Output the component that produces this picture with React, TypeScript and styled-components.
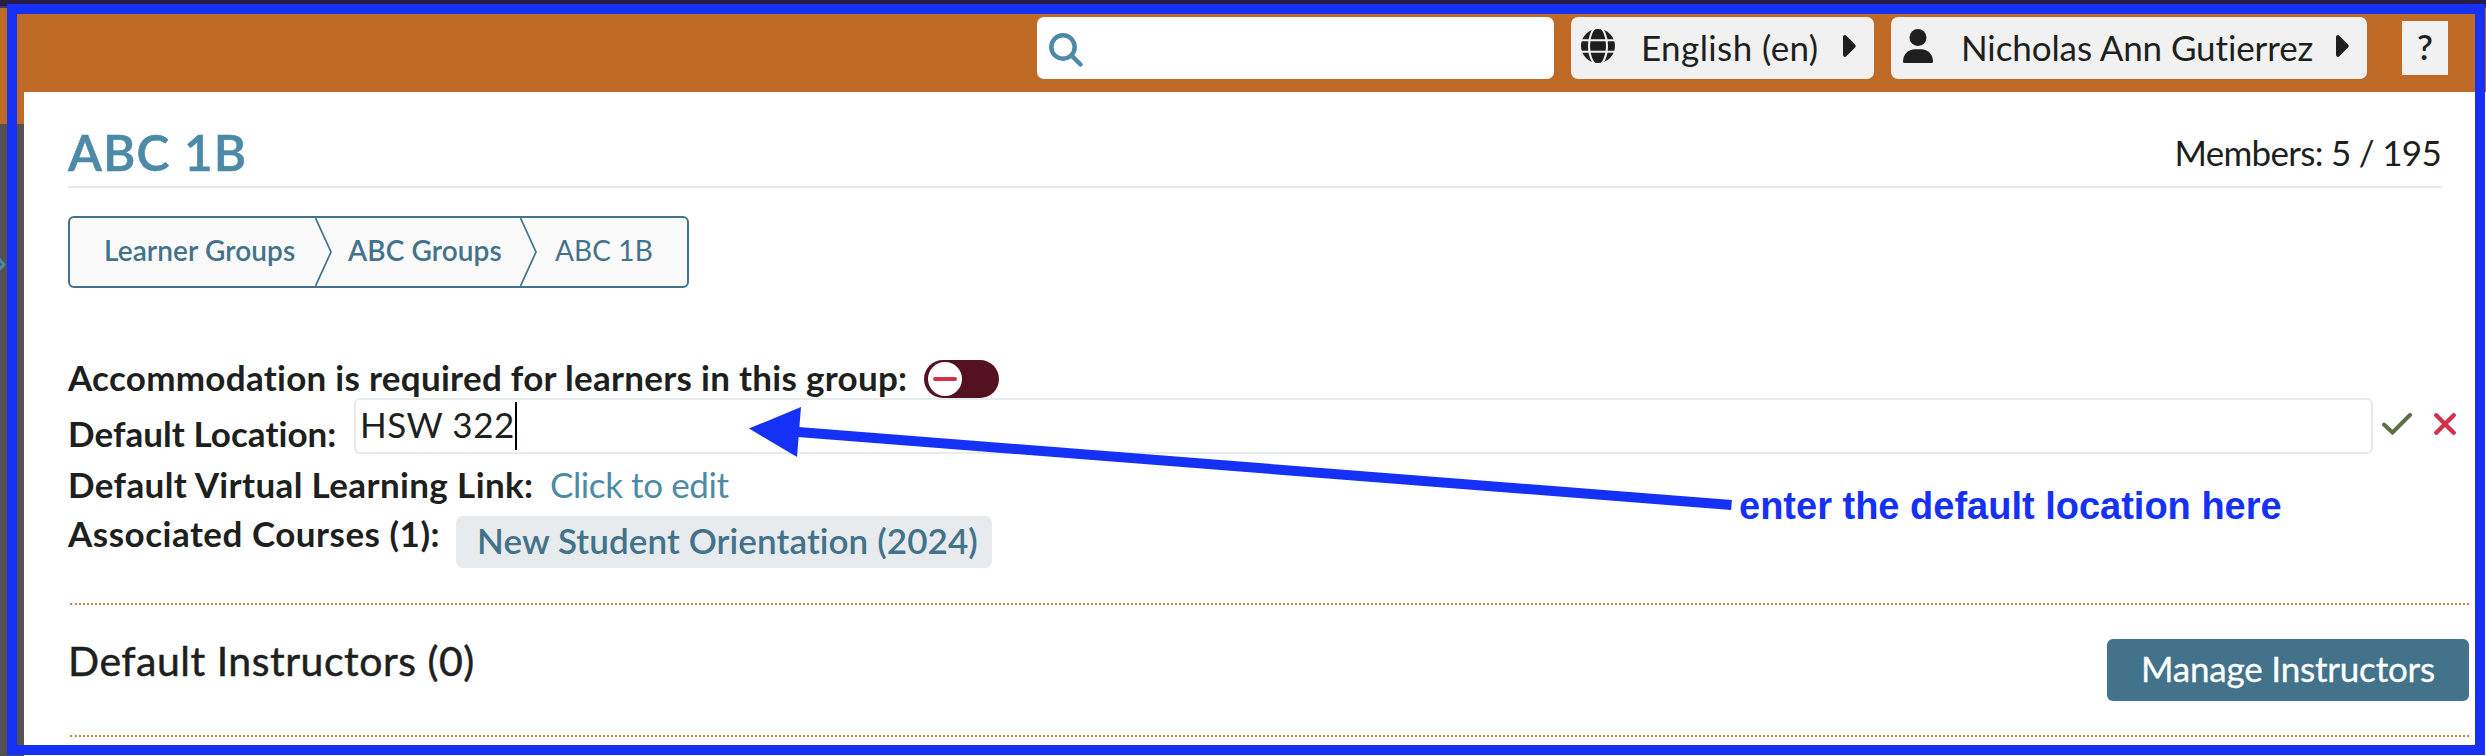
import React from 'react';
import styled, { createGlobalStyle } from 'styled-components';

const ink = '#201f20';
const teal = '#42738a';
const sky = '#4d8aa7';
const orange = '#bf6a27';
const marker = '#1431f5';

const GlobalStyle = createGlobalStyle`
  * { box-sizing: border-box; }
  body {
    margin: 0;
    background: #fff;
    color: ${ink};
    font-family: Lato, "Open Sans", sans-serif;
    font-size: 35px;
    font-variant-ligatures: none;
  }
  button { font: inherit; color: inherit; border: 0; padding: 0; margin: 0; }
`;

const Page = styled.div`
  position: relative;
  width: 2486px;
  height: 756px;
  overflow: hidden;
  display: flex;
  flex-direction: column;
`;

const BrowserStrip = styled.div`
  flex: 0 0 8px;
  background: #261d4b;
  border-bottom: 2px solid #3e3474;
`;

const Header = styled.header`
  flex: 0 0 84px;
  display: flex;
  align-items: flex-start;
  justify-content: flex-end;
  padding: 9px 38px 0 0;
  background: ${orange};
`;

const SearchBox = styled.div`
  width: 517px;
  height: 62px;
  padding: 16px 12px;
  margin-right: 17px;
  border-radius: 7px;
  background: #fff;
`;

const MenuButton = styled.button<{ $width: number; $inset: number; $gap: number }>`
  display: flex;
  align-items: center;
  width: ${(p) => p.$width}px;
  height: 62px;
  margin-right: ${(p) => p.$gap}px;
  padding: 0 18px 4px ${(p) => p.$inset}px;
  border-radius: 7px;
  background: #f1f1f1;
  svg { flex: none; }
`;

const MenuLabel = styled.span<{ $tracking: number; $indent: number }>`
  flex: 1;
  text-align: left;
  padding: 2px 0 0 ${(p) => p.$indent}px;
  line-height: 42px;
  white-space: nowrap;
  letter-spacing: ${(p) => p.$tracking}px;
`;

const HelpButton = styled.button`
  width: 46px;
  height: 54px;
  margin-top: 4px;
  padding-bottom: 3px;
  background: #f1f1f1;
  font-weight: 600;
  line-height: 51px;
`;

const Body = styled.div`
  flex: 1;
  display: flex;
`;

const Rail = styled.aside`
  flex: 0 0 24px;
  padding-top: 133px;
  background: #525252;
  border-top: 32px solid ${orange};
  svg { display: block; }
`;

const Main = styled.main`
  flex: 1;
  padding-left: 44px;
  background: #fff;
`;

const TitleRow = styled.div`
  display: flex;
  justify-content: space-between;
  width: 2374px;
  height: 96px;
  padding: 29px 1px 0 0;
  border-bottom: 2px solid #e8ebee;
  line-height: 60px;
`;

const Title = styled.h1`
  margin: 0;
  padding-top: 1px;
  font-size: 49.5px;
  font-weight: 600;
  letter-spacing: 1.1px;
  color: ${sky};
  -webkit-text-stroke: 0.6px ${sky};
`;

const Members = styled.div`
  padding-top: 1px;
  letter-spacing: -0.7px;
`;

const Breadcrumb = styled.nav`
  display: flex;
  width: 621px;
  height: 72px;
  margin-top: 28px;
  border: 2px solid ${teal};
  border-radius: 6px;
  background: #fafafa;
  color: ${teal};
  font-size: 28px;
  line-height: 65px;
  letter-spacing: 0.1px;
`;

const Crumb = styled.span<{ $width: number; $indent: number; $current?: boolean }>`
  width: ${(p) => p.$width}px;
  padding-left: ${(p) => p.$indent}px;
  font-weight: ${(p) => (p.$current ? 400 : 600)};
  white-space: nowrap;
`;

const Details = styled.section`
  margin-top: 67px;
`;

const Row = styled.div<{ $height: number }>`
  display: flex;
  align-items: flex-start;
  height: ${(p) => p.$height}px;
  white-space: nowrap;
`;

const Label = styled.label<{ $width: number; $top: number; $tracking: number }>`
  width: ${(p) => p.$width}px;
  padding-top: ${(p) => p.$top}px;
  line-height: 43px;
  font-weight: 700;
  letter-spacing: ${(p) => p.$tracking}px;
`;

const Toggle = styled.button`
  display: flex;
  align-items: center;
  width: 75px;
  height: 38px;
  margin-top: 5px;
  padding-left: 4px;
  border-radius: 19px;
  background: #54111f;
`;

const Knob = styled.span`
  display: flex;
  align-items: center;
  justify-content: center;
  width: 34px;
  height: 34px;
  border-radius: 50%;
  background: #fff;
  &::after {
    content: '';
    width: 24px;
    height: 4px;
    border-radius: 2px;
    background: #d3304b;
  }
`;

const LocationField = styled.div`
  display: flex;
  align-items: center;
  width: 2019px;
  height: 56px;
  padding-left: 4px;
  border: 2px solid #e8ebee;
  border-radius: 6px;
`;

const FieldText = styled.span`
  padding-bottom: 5px;
  line-height: 42px;
  letter-spacing: 0.5px;
`;

const Caret = styled.span`
  width: 2px;
  height: 48px;
  background: #000;
`;

const FieldActions = styled.div`
  display: flex;
  gap: 22px;
  padding: 15px 0 0 9px;
`;

const EditLink = styled.a`
  padding-top: 7px;
  line-height: 43px;
  letter-spacing: -0.4px;
  color: ${sky};
`;

const CourseTag = styled.a`
  width: 536px;
  height: 52px;
  margin-top: 5px;
  padding-left: 21px;
  border-radius: 7px;
  background: #e7ebee;
  color: ${teal};
  font-weight: 600;
  line-height: 48px;
  letter-spacing: 0.1px;
`;

const Instructors = styled.section`
  display: flex;
  justify-content: space-between;
  width: 2399px;
  height: 134px;
  margin-left: 2px;
  border: 0 dotted #c98747;
  border-width: 2px 0;
`;

const SectionTitle = styled.h2`
  margin: 31px 0 0 -2px;
  font-size: 41px;
  font-weight: 400;
  line-height: 50px;
  letter-spacing: 0.5px;
  -webkit-text-stroke: 0.5px ${ink};
`;

const ManageButton = styled.button`
  width: 362px;
  height: 62px;
  margin-top: 34px;
  padding-bottom: 5px;
  border-radius: 6px;
  background: ${teal};
  color: #fff;
  letter-spacing: -0.2px;
  -webkit-text-stroke: 0.3px #fff;
`;

const HighlightFrame = styled.div`
  position: absolute;
  left: 7px;
  top: 4px;
  width: 2478px;
  height: 751px;
  border: 10px solid ${marker};
`;

const Arrow = styled.svg`
  position: absolute;
  left: 740px;
  top: 400px;
`;

const Note = styled.div`
  position: absolute;
  left: 1739px;
  top: 484px;
  font: 700 38px/44px "Liberation Sans", Arial, sans-serif;
  color: ${marker};
  white-space: nowrap;
`;

const SearchIcon = () => (
  <svg width="35" height="35" viewBox="0 0 35 35" fill="none" stroke={sky} strokeWidth="4.5" strokeLinecap="round">
    <circle cx="14" cy="14" r="11.7" />
    <path d="M22.5 22.5 31.5 31.5" />
  </svg>
);

const GlobeIcon = () => (
  <svg width="34" height="34" viewBox="0 0 34 34">
    <circle cx="17" cy="17" r="17" fill={ink} />
    <g fill="none" stroke="#f1f1f1" strokeWidth="2">
      <ellipse cx="17" cy="17" rx="9" ry="19" />
      <path d="M0 11.3H34M0 22.700H34" />
    </g>
  </svg>
);

const UserIcon = () => (
  <svg width="30" height="34" viewBox="0 0 30 34" fill={ink}>
    <circle cx="15" cy="8.5" r="8.5" />
    <path d="M0 32.4C0 25.6 5.2 20.3 11.8 20.3H18.2C24.8 20.3 30 25.6 30 32.4A1.6 1.6 0 0 1 28.4 34H1.6A1.6 1.6 0 0 1 0 32.4Z" />
  </svg>
);

const CaretIcon = () => (
  <svg width="13" height="22" viewBox="0 0 14 22" preserveAspectRatio="none" fill={ink}>
    <path d="M0 2.2C0 .3 2.200-.6 3.600.7L13 9.5C13.9 10.3 13.9 11.7 13 12.5L3.600 21.3C2.200 22.6 0 21.7 0 19.8Z" />
  </svg>
);

const CheckIcon = () => (
  <svg width="30" height="22" viewBox="0 0 30 22" fill="none" stroke="#5a7148" strokeWidth="4" strokeLinecap="round">
    <path d="M2 11.5 10.5 19.5 28 2" />
  </svg>
);

const CrossIcon = () => (
  <svg width="22" height="22" viewBox="0 0 22 22" fill="none" stroke="#d3304b" strokeWidth="4.4" strokeLinecap="round">
    <path d="M2.3 2.3 19.7 19.7M19.7 2.3 2.3 19.7" />
  </svg>
);

const CrumbDivider = () => (
  <svg width="17" height="68" viewBox="0 0 17 68" fill="none" stroke={teal} strokeWidth="1.7">
    <path d="M.5 0 16 34 .5 68" />
  </svg>
);

export default function App() {
  return (
    <Page>
      <GlobalStyle />
      <BrowserStrip />
      <Header>
        <SearchBox>
          <SearchIcon />
        </SearchBox>
        <MenuButton $width={303} $inset={10} $gap={17}>
          <GlobeIcon />
          <MenuLabel $indent={26} $tracking={0.4}>English (en)</MenuLabel>
          <CaretIcon />
        </MenuButton>
        <MenuButton $width={476} $inset={12} $gap={35}>
          <UserIcon />
          <MenuLabel $indent={28} $tracking={-0.1}>Nicholas Ann Gutierrez</MenuLabel>
          <CaretIcon />
        </MenuButton>
        <HelpButton>?</HelpButton>
      </Header>
      <Body>
        <Rail>
          <svg width="6" height="16" viewBox="0 0 6 16" fill="none" stroke={sky} strokeWidth="3">
            <path d="M-3 0 4 7.5-3 15" />
          </svg>
        </Rail>
        <Main>
          <TitleRow>
            <Title>ABC 1B</Title>
            <Members>Members: 5 / 195</Members>
          </TitleRow>
          <Breadcrumb>
            <Crumb $width={245} $indent={34}>Learner Groups</Crumb>
            <CrumbDivider />
            <Crumb $width={188} $indent={16}>ABC Groups</Crumb>
            <CrumbDivider />
            <Crumb $width={150} $indent={18} $current>ABC 1B</Crumb>
          </Breadcrumb>
          <Details>
            <Row $height={43}>
              <Label $width={856} $top={1} $tracking={0.28}>
                Accommodation is required for learners in this group:
              </Label>
              <Toggle><Knob /></Toggle>
            </Row>
            <Row $height={58}>
              <Label $width={286} $top={14} $tracking={0.05}>Default Location:</Label>
              <LocationField>
                <FieldText>HSW 322</FieldText>
                <Caret />
              </LocationField>
              <FieldActions>
                <CheckIcon />
                <CrossIcon />
              </FieldActions>
            </Row>
            <Row $height={55}>
              <Label $width={482} $top={7} $tracking={0.37}>Default Virtual Learning Link:</Label>
              <EditLink>Click to edit</EditLink>
            </Row>
            <Row $height={92}>
              <Label $width={388} $top={1} $tracking={0.5}>Associated Courses (1):</Label>
              <CourseTag>New Student Orientation (2024)</CourseTag>
            </Row>
          </Details>
          <Instructors>
            <SectionTitle>Default Instructors (0)</SectionTitle>
            <ManageButton>Manage Instructors</ManageButton>
          </Instructors>
        </Main>
      </Body>
      <HighlightFrame />
      <Arrow width="1000" height="120" viewBox="740 400 1000 120">
        <path d="M798 432 1731.5 505" stroke={marker} strokeWidth="10" />
        <path d="M749 428.5 801 407 797 457Z" fill={marker} />
      </Arrow>
      <Note>enter the default location here</Note>
    </Page>
  );
}
